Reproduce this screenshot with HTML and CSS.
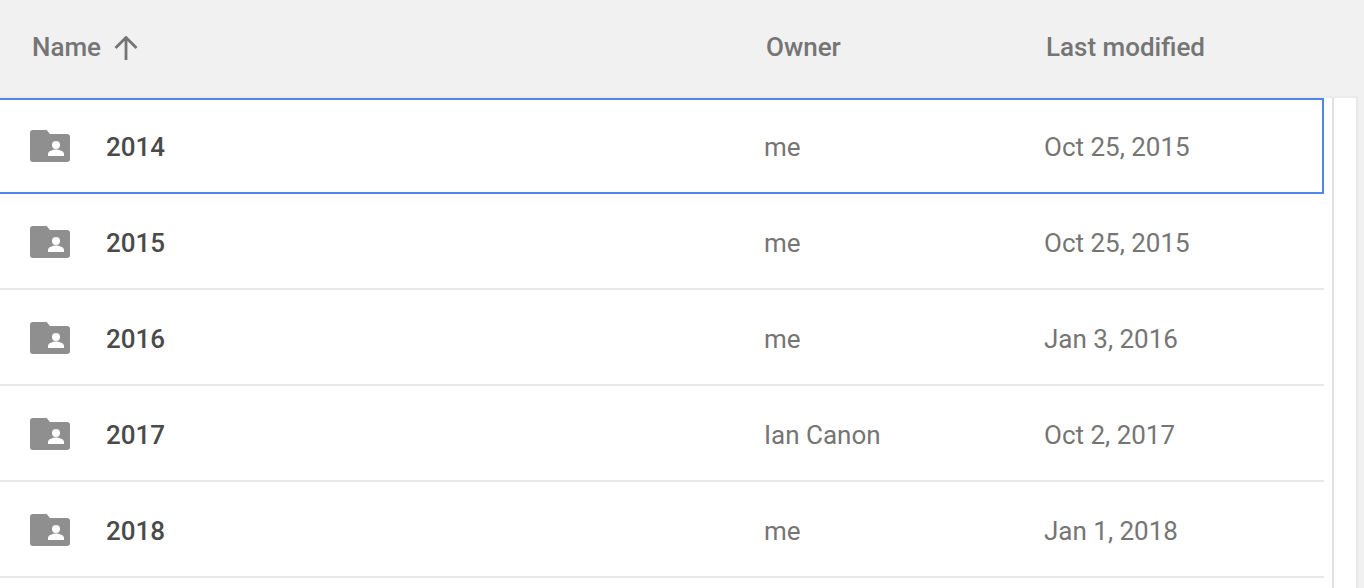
FILE: index.html
```html
<!DOCTYPE html>
<html lang="en">
<head>
<meta charset="utf-8">
<title>Drive folder list</title>
<link rel="stylesheet" href="styles.css">
</head>
<body>
<div class="page">
  <header class="head">
    <div class="col-name head-name">
      <span>Name</span>
      <svg class="arrow" viewBox="0 0 24 24" width="24" height="24"><path d="M12 24V2M1.500 12 12 1.500 22.500 12" fill="none" stroke="#757575" stroke-width="2.800"/></svg>
    </div>
    <div class="col-owner">Owner</div>
    <div class="col-date">Last modified</div>
  </header>
  <main class="panel">
    <div class="rows">
      <div class="row selected">
        <svg class="folder" viewBox="0 0 40 32" width="40" height="32"><use href="#shared"/></svg>
        <div class="name">2014</div><div class="owner">me</div><div class="date">Oct 25, 2015</div>
      </div>
      <div class="row">
        <svg class="folder" viewBox="0 0 40 32" width="40" height="32"><use href="#shared"/></svg>
        <div class="name">2015</div><div class="owner">me</div><div class="date">Oct 25, 2015</div>
      </div>
      <div class="row">
        <svg class="folder" viewBox="0 0 40 32" width="40" height="32"><use href="#shared"/></svg>
        <div class="name">2016</div><div class="owner">me</div><div class="date">Jan 3, 2016</div>
      </div>
      <div class="row">
        <svg class="folder" viewBox="0 0 40 32" width="40" height="32"><use href="#shared"/></svg>
        <div class="name">2017</div><div class="owner">Ian Canon</div><div class="date">Oct 2, 2017</div>
      </div>
      <div class="row">
        <svg class="folder" viewBox="0 0 40 32" width="40" height="32"><use href="#shared"/></svg>
        <div class="name">2018</div><div class="owner">me</div><div class="date">Jan 1, 2018</div>
      </div>
    </div>
    <div class="scrollbar"></div>
  </main>
</div>
<svg class="defs" width="0" height="0">
  <symbol id="shared" viewBox="0 0 40 32">
    <path fill="#8f8f8f" fill-rule="evenodd" d="M3 0h13.500L20 4h17a3 3 0 0 1 3 3v22a3 3 0 0 1-3 3H3a3 3 0 0 1-3-3V3a3 3 0 0 1 3-3z"/>
    <circle cx="26" cy="15" r="4" fill="#fff"/>
    <path fill="#fff" d="M18 26v-2c0-3 5-4.500 8-4.500s8 1.500 8 4.500v2z"/>
  </symbol>
</svg>
</body>
</html>
```
FILE: styles.css
```css
* { box-sizing: border-box; }
html, body { margin: 0; height: 100%; overflow: hidden; }
body { background: #f1f1f1; font-family: Roboto, "Liberation Sans", sans-serif; font-size: 26px; }
.page { width: 1364px; height: 588px; display: flex; flex-direction: column; }
.head { height: 96px; flex: none; display: flex; align-items: center; color: #757575; font-weight: 500; font-size: 26px; padding-bottom: 2px; }
.col-name { width: 766px; padding-left: 32px; }
.head-name { display: flex; align-items: center; gap: 13px; }
.arrow { display: block; margin-top: 2px; }
.col-owner { width: 280px; }
.panel { flex: 1; width: 1358px; display: flex; background: #fff; border-top: 2px solid #ececec; border-right: 2px solid #e8e8e8; }
.rows { width: 1324px; flex: none; }
.row { height: 96px; display: flex; align-items: center; border-top: 2px solid transparent; border-bottom: 2px solid #e8e8e8; padding: 2px 0 0 30px; }
.row.selected { border: 2px solid #4f86ec; border-left: 0; }
.folder { flex: none; width: 40px; height: 32px; margin-right: 36px; margin-top: -2px; }
.name { width: 658px; color: #4a4a4a; font-weight: 500; }
.owner { width: 280px; color: #757575; }
.date { color: #757575; }
.scrollbar { width: 24px; margin-left: 8px; border-left: 2px solid #e0e0e0; }
.defs { position: absolute; }
```
